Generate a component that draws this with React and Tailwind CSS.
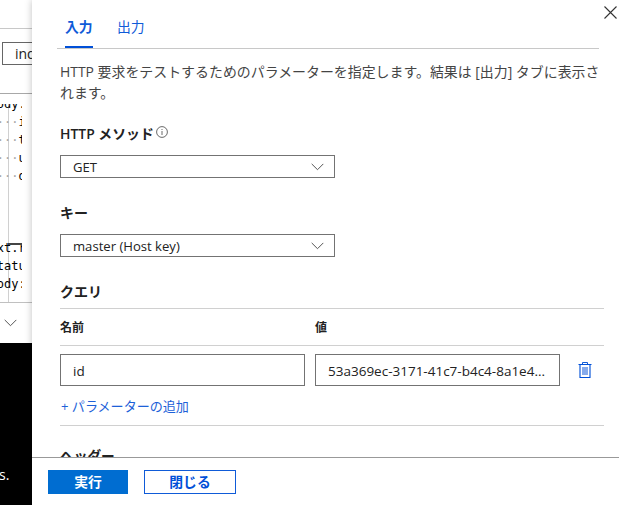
import React from "react";

const LATIN = "font-['Open_Sans','Noto_Sans_CJK_JP',sans-serif]";

function Chevron({ className }) {
  return (
    <svg className={className} width="13" height="8" viewBox="0 0 13 8" fill="none" stroke="#555" strokeWidth="1">
      <path d="M0.7 0.9 6.5 6.7 12.3 0.9" />
    </svg>
  );
}

function CodeLine({ text, dots }) {
  return (
    <div className="h-[18px] whitespace-pre leading-[18px]">
      {dots && <span className="text-[#a8a8a8]">{"····"}</span>}
      {text}
    </div>
  );
}

function Background() {
  return (
    <div className="flex h-full w-8 shrink-0 flex-col overflow-hidden bg-white">
      <div className="h-[29px] shrink-0 border-b border-[#c8c8c8]" />
      <div className="h-[65px] shrink-0 border-b border-[#a8a8a8] pt-[13px] pl-[2px]">
        <div className="h-[23px] w-20 border border-[#666] pl-3 text-[14px] leading-[22px] text-[#222]">index.js</div>
      </div>
      <div className="h-[10px] shrink-0" />
      <div className="relative h-[199px] shrink-0 border-b border-[#c0c0c0]">
        <div className="absolute top-0 left-2 h-full w-px bg-[#d0d0d0]" />
        <div className="relative h-[198px] w-[22px] overflow-hidden">
          <div className="-mt-[9px] -ml-[10.5px] font-['DejaVu_Sans_Mono',monospace] text-[12px] text-black">
            <CodeLine text="body:" />
            <CodeLine dots text="id" />
            <CodeLine dots text="title" />
            <CodeLine dots text="url" />
            <CodeLine dots text="desc" />
            <CodeLine text="" />
            <CodeLine text="" />
            <CodeLine text="" />
            <CodeLine text="ext.res" />
            <CodeLine text="status" />
            <CodeLine text="body:" />
          </div>
          <div className="absolute top-[139px] left-2 h-[2px] w-[14px] bg-[#444]" />
        </div>
      </div>
      <div className="flex h-10 shrink-0 items-center pl-1">
        <Chevron />
      </div>
      <div className="flex-1 bg-black pt-[122px] text-[14px] leading-[20px] text-white">
        <span className="-ml-px">s.</span>
      </div>
    </div>
  );
}

function Select({ value }) {
  return (
    <div className="flex h-[23px] w-[275px] items-center justify-between border border-[#737373] pr-[10px] pl-3">
      <span className="pt-px text-[13.1px] leading-[20px] text-[#222]">{value}</span>
      <Chevron />
    </div>
  );
}

export default function App() {
  return (
    <div className={`flex h-[505px] w-[619px] overflow-hidden bg-white ${LATIN}`}>
      <Background />
      <div className="relative flex h-full w-[587px] flex-col bg-white shadow-[0_0_7px_rgba(0,0,0,0.25)]">
        <svg className="absolute top-[6px] right-[2px]" width="13" height="13" viewBox="0 0 13 13" fill="none" stroke="#333" strokeWidth="1.1">
          <path d="M0.5 0.5 12.5 12.5M12.5 0.5 0.5 12.5" />
        </svg>
        <div className="h-[457px] overflow-hidden pl-7">
          <div className="-ml-[3px] flex h-[49px] w-[542px] gap-[25px] border-b border-[#c8c8c8] pt-[17px] pl-2 text-[13.8px] leading-[20px] text-[#0f5bd8]">
            <div className="h-[31px] w-7 border-b-2 border-[#0050d8] font-bold whitespace-nowrap">入力</div>
            <div className="-ml-px whitespace-nowrap">出力</div>
          </div>
          <p className="h-[75px] w-[550px] pt-[12px] text-[13.93px] leading-[21px] whitespace-nowrap text-[#444]">
            HTTP 要求をテストするためのパラメーターを指定します。結果は [出力] タブに表示さ<br />れます。
          </p>
          <div className="flex h-[31px] gap-[2px] text-[13.9px] leading-[20px] font-semibold text-[#222]">
            <span>
              HTTP <span className="font-bold">メソッド</span>
            </span>
            <svg className="mt-[2px]" width="12" height="12" viewBox="0 0 12 12" fill="none" stroke="#444" strokeWidth="0.8">
              <circle cx="6" cy="6" r="5.4" />
              <path d="M6 5v4M6 3v1" />
            </svg>
          </div>
          <Select value="GET" />
          <div className="h-[56px] pt-[25px] text-[14px] leading-[20px] font-bold text-[#222]">キー</div>
          <Select value="master (Host key)" />
          <div className="h-[52px] w-[544px] border-b border-[#d0d0d0] pt-[25px] text-[14px] leading-[20px] font-bold text-[#222]">クエリ</div>
          <div className="flex h-[37px] w-[544px] items-center border-b border-[#d0d0d0] pt-[2px] text-[12px] font-bold text-[#222]">
            <span className="w-[255px]">名前</span>
            <span>値</span>
          </div>
          <div className="flex h-[40px] items-end gap-[10px] text-[13.5px] text-[#222]">
            <div className="flex h-8 w-[245px] items-center border border-[#737373] pt-[2px] pl-3">id</div>
            <div className="flex h-8 w-[245px] items-center border border-[#737373] pt-[2px] pl-3">53a369ec-3171-41c7-b4c4-8a1e4...</div>
            <svg className="mb-[7px] ml-2" width="14" height="17" viewBox="0 0 14 17" fill="none">
              <path d="M4.5 2v-1.5h5v1.5" stroke="#0f5bd8" />
              <path d="M0.5 2.5h13" stroke="#0050d8" />
              <path d="M2 3v13M12 3v13" stroke="#6f9ce8" strokeWidth="2" />
              <path d="M2 15.5h10" stroke="#0050d8" />
              <path d="M4 5h6v8h-6z" fill="#87abeb" />
            </svg>
          </div>
          <div className="h-[40px] w-[544px] border-b border-[#d0d0d0] pt-[10px] pl-px text-[13.05px] leading-[20px] text-[#1d61d8]">
            + パラメーターの追加
          </div>
          <div className="pt-5 text-[13.7px] leading-[20px] font-bold text-[#222]">ヘッダー</div>
        </div>
        <div className="flex h-12 gap-4 border-t border-[#999] pt-3 pl-4 text-[13.8px] font-bold">
          <div className="flex h-6 w-20 items-center justify-center bg-[#006dd1] pb-px leading-[20px] text-white">実行</div>
          <div className="flex h-6 w-[92px] items-center justify-center border border-[#0f5bd8] pb-px leading-[20px] text-[#0050d8]">閉じる</div>
        </div>
      </div>
    </div>
  );
}
